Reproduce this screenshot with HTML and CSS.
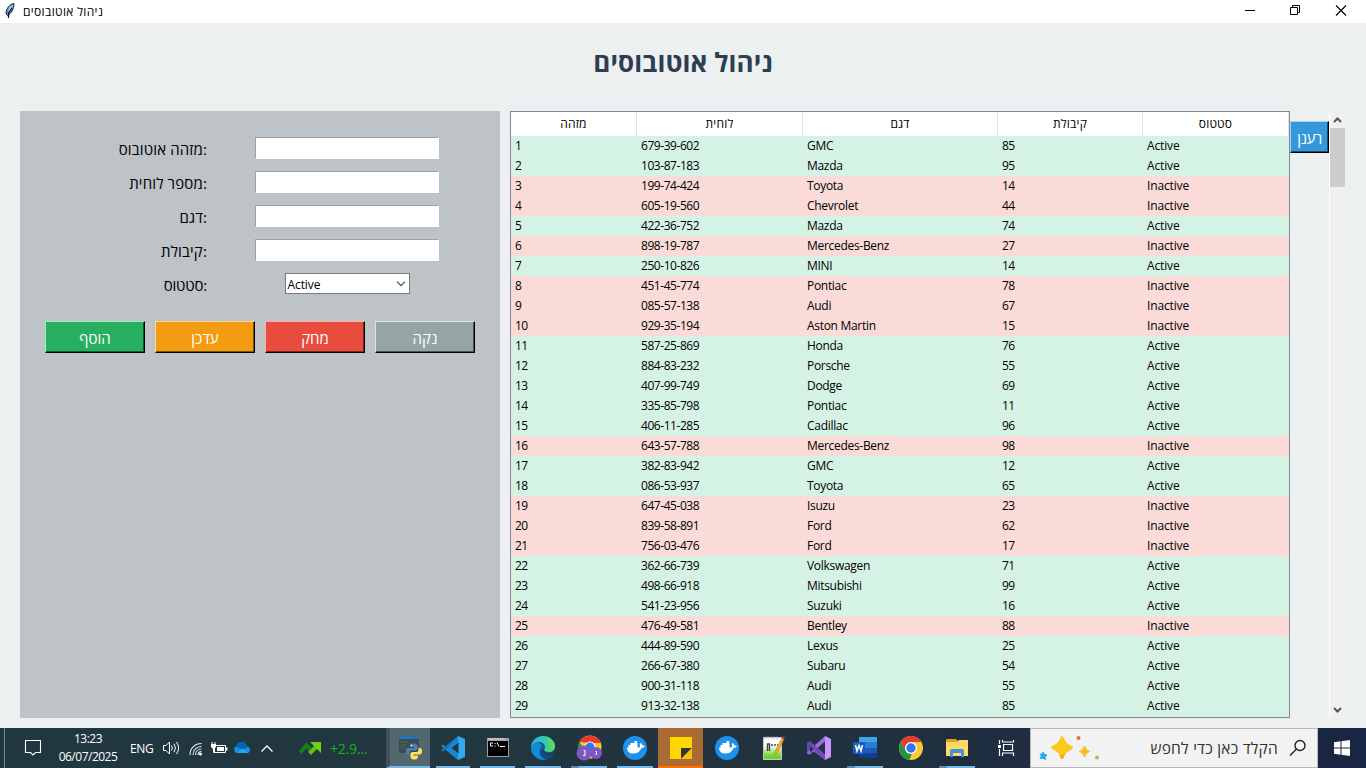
FILE: index.html
```
<!DOCTYPE html>
<html lang="he">
<head>
<meta charset="utf-8">
<title>ניהול אוטובוסים</title>
<link rel="stylesheet" href="styles.css">
</head>
<body>
<div class="screen">
  <header class="titlebar">
    <svg class="feather" width="10" height="16" viewBox="0 0 10 16"><path d="M9 .5C5 1 1 5 1 11l1.500 1.500C6 11 9 6 9 .5z" fill="#5b8fd0" stroke="#222a35"/><path d="M7.500 2 3 11M5 3v4M4 6v3" stroke="#c3dcf6" fill="none"/><path d="M7 5 3.500 10v5" stroke="#111" fill="none" stroke-width="1.200"/></svg>
    <span class="window-title">ניהול אוטובוסים</span>
    <div class="controls">
      <svg width="46" height="22" viewBox="0 0 46 22"><path d="M15 10.500h10" stroke="#000"/></svg>
      <svg width="46" height="22" viewBox="0 0 46 22"><path d="M14.500 7.500h7v7h-7zM16.500 7V5.500h7v7H22" stroke="#000" fill="none"/></svg>
      <svg width="46" height="22" viewBox="0 0 46 22"><path d="m14 5.500 10 10m0-10-10 10" stroke="#000" stroke-width="1.100"/></svg>
    </div>
  </header>
  <main class="app">
    <h1 class="heading"><span>ניהול אוטובוסים</span></h1>
    <div class="content">
      <section class="form">
        <div class="field"><label>מזהה אוטובוס:</label><input class="entry"></div>
        <div class="field"><label>מספר לוחית:</label><input class="entry"></div>
        <div class="field"><label>דגם:</label><input class="entry"></div>
        <div class="field"><label>קיבולת:</label><input class="entry"></div>
        <div class="field"><label class="tight">סטטוס:</label>
          <div class="combo"><span>Active</span><svg width="10" height="6" viewBox="0 0 10 6"><path d="m1 .7 4 4 4-4" fill="none" stroke="#444" stroke-width="1.100"/></svg></div>
        </div>
        <div class="actions">
          <button class="btn add">הוסף</button>
          <button class="btn update">עדכן</button>
          <button class="btn delete">מחק</button>
          <button class="btn clear">נקה</button>
        </div>
      </section>
      <section class="table">
        <div class="row head"><span>מזהה</span><span>לוחית</span><span>דגם</span><span>קיבולת</span><span>סטטוס</span></div>
        <div id="rows"></div>
      </section>
      <button class="btn refresh">רענן</button>
      <div class="scrollbar">
        <svg width="15" height="17" viewBox="0 0 15 17"><path d="M4 11 7.500 7.500 11 11" fill="none" stroke="#555" stroke-width="2"/></svg>
        <div class="thumb"></div>
        <svg class="down" width="15" height="17" viewBox="0 0 15 17"><path d="M4 7 7.500 10.500 11 7" fill="none" stroke="#555" stroke-width="2"/></svg>
      </div>
    </div>
  </main>
  <footer class="taskbar">
    <div class="tray">
      <svg class="note" width="18" height="18" viewBox="0 0 18 18"><path d="M1.500 1.500h15v12h-5l-2.500 2.500-2.500-2.500h-5z" fill="none" stroke="#fff" stroke-width="1.100"/></svg>
      <div class="clock"><span>13:23</span><span>06/07/2025</span></div>
      <span class="lang">ENG</span>
      <svg class="speaker" width="18" height="16" viewBox="0 0 18 16"><path d="M1.500 5.500h2.500l3.500-3.500v12l-3.500-3.500h-2.500z" fill="none" stroke="#fff"/><path d="M9.500 5.500q1.800 2.500 0 5M12 3.800q3 4.200 0 8.400M14.500 2q4.200 6 0 12" fill="none" stroke="#fff"/></svg>
      <svg class="wifi" width="14" height="14" viewBox="0 0 14 14"><g fill="none" stroke="#e8eef0" stroke-width="1.100"><path d="M1 13C1 6 6 1.500 12.500 1.500M4 13c0-5 3.500-8.500 8.500-8.500M6.500 13c0-3.500 2.500-6 6-6M9 13c0-2 1.500-3.500 3.500-3.500"/></g><circle cx="11.500" cy="12" r="1.500" fill="#fff"/></svg>
      <svg class="battery" width="18" height="14" viewBox="0 0 18 14"><path d="M4.500 4.500h11v7h-11z" fill="none" stroke="#fff"/><path d="M7 6h7v4H7zM16 6.500h1.500v3H16zM1 3h5v3L4.500 7.500h-2L1 6z" fill="#fff"/><path d="M2 1v2m3-2v2M3.500 7v4.500h2" stroke="#fff" fill="none"/></svg>
      <svg class="cloud" width="18" height="12" viewBox="0 0 18 12"><path d="M4 11a3.500 3.500 0 0 1-.5-7A5.500 5.500 0 0 1 13 4.500a3.400 3.400 0 0 1 1 6.500z" fill="#1490df"/><path d="M2 5A5.500 5.500 0 0 1 12.500 3L14 5 9 7.500z" fill="#0364b8"/><path d="M3 10.500 9 6.500l5 4.500H4z" fill="#28a8ea"/></svg>
      <svg class="chev" width="14" height="9" viewBox="0 0 14 9"><path d="m1.500 7.500 5.500-5.500 5.500 5.500" fill="none" stroke="#fff" stroke-width="1.300"/></svg>
      <svg class="trend" width="23" height="15" viewBox="0 0 23 15"><path d="m1 11.500 6.500-7 5 5" fill="none" stroke="#16801d" stroke-width="4"/><path d="m9 11 7-7 3 3-7 7z" fill="#62bf16"/><path d="M11 1h11v11z" fill="#71d111"/></svg>
      <span class="stock">+2.9...</span>
    </div>
    <div class="apps">
      <div class="slot active"><svg width="24" height="24" viewBox="0 0 24 24"><path d="M1 1h20v16H1z" fill="#414a4d"/><path d="M1 1h20v2H1z" fill="#087bd3"/><path d="M3 6h7M3 9h5M3 12h4" stroke="#3b704c" stroke-width="1.500"/><path d="M15.500 7.500c-3.500 0-4 1-4 3.500h4.500v1h-6C7 12 7 18.500 10 18.500h1.500v-2.200q0-1.800 2-1.800h4q2 0 2-2V10.500c0-2-1.500-3-4-3z" fill="#4584b6"/><path d="M15.800 23.500c3.700 0 4.200-1.500 4.200-4h-4.500v-1h6.500c2.800 0 2.800-6.500 0-6.500h-1.500v2q0 2-2 2h-4q-2 0-2 2V21c0 1.500 1.300 2.500 3.300 2.500z" fill="#ffe062"/><circle cx="13.500" cy="9.500" r=".8" fill="#fff"/></svg></div>
      <div class="slot open"><svg width="24" height="24" viewBox="0 0 24 24"><path d="M17 0 5 11 2 8.500.5 9.500v1L17 24l1-1V1z" fill="#1a86cf"/><path d="M17 0 5 13 2 15.500.5 14.500v-1L4 10.500z" fill="#1474b8"/><path d="M17 0 24 3v18l-7 3z" fill="#34a8ee"/><path d="M17.500 6.500V17.500L10.500 12z" fill="#22373f"/></svg></div>
      <div class="slot open"><svg width="24" height="24" viewBox="0 0 24 24"><path d="M1 2h22v19H1z" fill="#9aa0a2"/><path d="M2 5h20v15H2z" fill="#000"/><path d="M2 3h17" stroke="#ddd"/><path d="M7 7H4.500v3H7M9 7v1m0 1.500v1M11 6.500l2 4M14 10.500h5" stroke="#fff" fill="none"/></svg></div>
      <div class="slot open"><svg width="24" height="24" viewBox="0 0 24 24"><defs><linearGradient id="eg"><stop stop-color="#28aeea"/><stop offset=".6" stop-color="#35cba8"/><stop offset="1" stop-color="#66df48"/></linearGradient></defs><circle cx="12" cy="12" r="12" fill="#0c5a9f"/><path d="M0 12C0 5 5 0 12 0c7 0 12 5 12 10 0 4-3 6-6 6-3 0-5-1-5-2 0-1 1-1 1-3 0-3-3-5-6-5-4 0-7 3-8 6z" fill="url(#eg)"/><path d="M0 12C0 7 5 6 8 7c2 1 3 2 3 4-3 2-3 8 1 11 1 1 2 1.500 3 1.700C7 25 0 19 0 12z" fill="#1689d5"/><path d="M11.500 10c-3 5 2 11 10.500 8l.8-.5c.2 0 .4.2.2.5L20 22c-6 3-11-1-11-6 0-3 1-4.500 2.500-6z" fill="#164a82"/><path d="M13 14c0 2 3 4 7 3 2-.5 3-2 4-4v5l-1.500-.5C18 20 12 18.500 12 14z" fill="#22373f"/></svg></div>
      <div class="slot open stacked"><svg width="26" height="26" viewBox="0 0 26 26"><circle cx="14" cy="12" r="11.500" fill="#fcc934"/><path d="M3.500 7A12 12 0 0 1 25 8H14z" fill="#e8392b"/><path d="M3.500 7 10 17l-3 5C1 18 1 11 3.500 7z" fill="#2a9547"/><circle cx="14" cy="12" r="5.500" fill="#fff"/><circle cx="14" cy="12" r="4.500" fill="#3478e5"/><circle cx="8" cy="18" r="7.500" fill="#7e57c2"/><circle cx="20" cy="18" r="6" fill="#7e57c2"/><path d="M7.500 15.500H9v5H7M19.500 16.500h1v3h-1" stroke="#fff" fill="none"/></svg></div>
      <div class="slot open"><svg width="24" height="24" viewBox="0 0 24 24"><circle cx="12" cy="12" r="12" fill="#1d91ec"/><path d="M4 11.500h12.500q1-1.500.3-3.500l1.200-1q1.300 1 1.500 2.500 1.500-.2 2.500.5-1 2-3.500 2-2 5.500-8.500 5.500-6 0-6-6zM5.500 9h9v2.500h-9zM7.500 7h7v2h-7zM11.500 5H14v2h-2.500z" fill="#fff"/></svg></div>
      <div class="slot sticky"><svg width="24" height="24" viewBox="0 0 24 24"><path d="M1 1h22v11L12 23H1z" fill="#ffd600"/><path d="M12 12h11L12 23z" fill="#34353a"/><path d="M23 12v11H12z" fill="#f5c400"/></svg></div>
      <div class="slot"><svg width="24" height="24" viewBox="0 0 24 24"><circle cx="12" cy="12" r="12" fill="#1d91ec"/><path d="M4 11.500h12.500q1-1.500.3-3.500l1.200-1q1.300 1 1.500 2.500 1.500-.2 2.500.5-1 2-3.500 2-2 5.500-8.500 5.500-6 0-6-6zM5.500 9h9v2.500h-9zM7.500 7h7v2h-7zM11.500 5H14v2h-2.500z" fill="#fff"/></svg></div>
      <div class="slot"><svg width="24" height="24" viewBox="0 0 24 24"><defs><linearGradient id="ng" x2="0" y2="1"><stop offset=".35" stop-color="#fff"/><stop offset=".85" stop-color="#6cd52b"/></linearGradient></defs><path d="M2.500 1.500h18v22h-18z" fill="url(#ng)" stroke="#c5cbc5"/><path d="M4 .5v3m3-3v3m3-3v3m3-3v3m3-3v3" stroke="#bbb"/><path d="M6.500 15V8h2v7m1.500-6h2m1 0h2m1 0h1" fill="none" stroke="#454545" stroke-width="1.400"/><path d="m21 2 2 1-6.500 14-3 2 .5-3.500z" fill="#efac22" stroke="#a97a26" stroke-width=".5"/><path d="m21.500 0 2.500 1-1 2-2-1z" fill="#a03e3c"/></svg></div>
      <div class="slot"><svg width="24" height="24" viewBox="0 0 24 24"><path d="M0 6.500 3 5.500l15 13V24L3 12.500l-3 4z" fill="#8257cd"/><path d="M0 6.500 3 5.500v13l-3-1z" fill="#6545a6"/><path d="m3 18.500 15-13V0L0 16.500v1z" fill="#9a6be2"/><path d="M3 5.500 9 11l-6 6z" fill="#20323d"/><path d="M3 5.500 18 18.500V24L3 10z" fill="#7349b8"/><path d="m18 0 6 3v18l-6 3z" fill="#ca94ff"/></svg></div>
      <div class="slot open stacked"><svg width="24" height="24" viewBox="0 0 24 24"><path d="M6 1h18v6H6z" fill="#41a5ee"/><path d="M6 6h18v6H6z" fill="#2b7cd3"/><path d="M6 12h18v5H6z" fill="#185abd"/><path d="M6 17h18v5H6z" fill="#103f91"/><rect y="6" width="12" height="12" rx="1" fill="#185abd"/><path d="m2.500 9 1.500 6 2-5.500L8 15l1.500-6" fill="none" stroke="#fff" stroke-width="1.500"/></svg></div>
      <div class="slot"><svg width="24" height="24" viewBox="0 0 24 24"><circle cx="12" cy="12" r="12" fill="#fcc934"/><path d="M1.600 6A12 12 0 0 1 22.400 6H12l-5 9z" fill="#e33b2e"/><path d="M1.600 6 7 15l6 2-2.500 7C1 23-2 13 1.600 6z" fill="#259344"/><circle cx="12" cy="12" r="6" fill="#fff"/><circle cx="12" cy="12" r="4.700" fill="#3277e8"/></svg></div>
      <div class="slot open stacked"><svg width="24" height="24" viewBox="0 0 24 24"><path d="M2 3h9l2 2h9q1 0 1 1v14H1V4z" fill="#e4a11b"/><path d="M1 6h11l2-2h9v16H1z" fill="#ffd867"/><path d="M5 21v-6q0-2 2-2h10q2 0 2 2v6h-3v-4h-8v4z" fill="#3b97dc"/></svg></div>
      <div class="slot view"><svg width="18" height="18" viewBox="0 0 18 18"><path d="M6.500 5.500h9v6h-9zM5.500 1v2h11V1M5.500 17v-3h11v3M2.500 1v4m0 5v7" fill="none" stroke="#fff" stroke-width="1.200"/><path d="M1 6h3v3H1z" fill="#fff"/></svg></div>
    </div>
    <div class="search">
      <svg width="62" height="28" viewBox="0 0 62 28"><path d="M24 2q1 0 1.500 1.500Q27.500 9.500 33 11.500q2 1 2 2t-2 2q-5.500 2-7.500 8Q25 25 24 25t-1.500-1.500q-2-6-7.500-8-2-1-2-2t2-2q5.500-2 7.500-8Q23 2 24 2z" fill="#fdc81a"/><path d="M34 15q-6 2-8.500 8.500Q25 25 24 25t-1.500-1.500l-1-2.500Q28 20 34 15z" fill="#f5ab13"/><path d="M46.500 12q1 4.500 5 5.500-4 1-5 5.500-1-4.500-5-5.500 4-1 5-5.500z" fill="#fdbb17" stroke="#fdbb17"/><path d="m5 18 1.500 2.500L9 21l-2 1.500.5 3L5 24l-3 .5L3.500 22 2 20l2.500.5z" fill="#18a8ee" stroke="#18a8ee"/><circle cx="40.500" cy="4" r="2" fill="#f06a32"/><circle cx="59" cy="23.500" r="2" fill="#8dcf47"/></svg>
      <span class="search-text">הקלד כאן כדי לחפש</span>
      <svg class="glass" width="18" height="18" viewBox="0 0 18 18"><circle cx="11" cy="6.500" r="5" fill="none" stroke="#222" stroke-width="1.400"/><path d="M7.300 10.200 1 16.500" stroke="#222" stroke-width="1.400"/></svg>
    </div>
    <div class="start"><svg width="16" height="16" viewBox="0 0 16 16"><path d="m0 2.300 6.500-1v6.200H0zM7.500 1.200 16 0v7.500H7.500zM0 8.500h6.500v6.200l-6.500-1zM7.500 8.500H16V16l-8.500-1.200z" fill="#fff"/></svg></div>
  </footer>
</div>
<script src="app.js"></script>
</body>
</html>
```
FILE: styles.css
```
* { box-sizing: border-box; }
body { margin: 0; font-family: "Open Sans", "Noto Sans", sans-serif; font-size: 12px; color: #000; }
svg { display: block; flex: none; }
.screen { width: 1366px; height: 768px; display: flex; flex-direction: column; overflow: hidden; background: #ecf0f1; }
.titlebar { height: 23px; flex: none; background: #fff; display: flex; align-items: center; padding-left: 5px; }
.feather { margin-top: -2px; }
.window-title { margin-left: 8px; font-size: 12px; line-height: 22px; letter-spacing: .35px; white-space: nowrap; }
.controls { margin-left: auto; display: flex; height: 22px; margin-bottom: 1px; margin-right: -2px; }
.app { flex: 1; padding: 0 20px 10px; display: flex; flex-direction: column; min-height: 0; }
.heading { margin: 0; height: 88px; padding-top: 21px; line-height: 36px; font-size: 26px; font-weight: 700; color: #2c3e50; text-align: center; letter-spacing: .1px; }
.content { display: flex; flex: 1; min-height: 0; }
.form { width: 480px; margin-right: 10px; background: #bdc3c7; padding: 20px 25px; }
.field { display: grid; grid-template-columns: 162px 184px; column-gap: 48px; height: 34px; align-items: center; }
.field label { text-align: right; font-size: 15px; line-height: 20px; padding-top: 1px; letter-spacing: .15px; white-space: nowrap; }
.field .tight { letter-spacing: -.2px; }
.entry { width: 184px; height: 22px; margin: 0; padding: 0; border: 1px solid #fff; border-top-color: #a0a0a0; border-left-color: #a0a0a0; background: #fff; border-radius: 0; }
.combo { justify-self: center; width: 125px; height: 21px; border: 1px solid #7a7a7a; background: #fff; display: flex; align-items: center; justify-content: space-between; padding: 1px 3px 0 2px; margin-bottom: 1px; letter-spacing: -.1px; }
.actions { display: flex; gap: 10px; margin-top: 20px; }
.btn { font-family: inherit; font-size: 15px; line-height: 20px; color: #fff; margin: 0; padding: 1px 0 0; width: 100px; height: 32px; border: 1px solid; border-bottom: 1px solid #000; border-right: 1px solid #000; border-radius: 0; white-space: nowrap; }
.add { background: #27ae60; border-top-color: #9df0bd; border-left-color: #9df0bd; box-shadow: inset -1px -1px #14592f; }
.update { background: #f39c12; border-top-color: #ffd89b; border-left-color: #ffd89b; box-shadow: inset -1px -1px #7b4f07; }
.delete { background: #e74c3c; border-top-color: #ffb1a9; border-left-color: #ffb1a9; box-shadow: inset -1px -1px #762620; }
.clear { background: #95a5a6; border-top-color: #d9e6e6; border-left-color: #d9e6e6; box-shadow: inset -1px -1px #4b5455; }
.refresh { background: #3498db; border-top-color: #a4d6f8; border-left-color: #a4d6f8; box-shadow: inset -1px -1px #1a4e71; width: 39px; margin-top: 10px; letter-spacing: -.5px; }
.table { width: 780px; border: 1px solid #828790; background: #d5f3e5; overflow: hidden; }
.row { display: grid; grid-template-columns: 126px 166px 195px 145px 146px; height: 20px; line-height: 20px; background: #d5f3e5; }
.row span { padding-left: 4px; white-space: nowrap; }
.row .plate { letter-spacing: -.45px; }
.row .num { letter-spacing: -.6px; }
.row .word { letter-spacing: -.3px; }
.row .state { letter-spacing: -.15px; }
.row.inactive { background: #fadbd8; }
.row.head { height: 24px; line-height: 24px; background: #fff; letter-spacing: .2px; }
.row.head span { padding: 0; text-align: center; border-right: 1px solid #e5e5e5; }
.scrollbar { width: 17px; border-left: 1px solid #fff; background: #f0f0f0; background-clip: padding-box; border-right: 1px solid #ecf0f1; display: flex; flex-direction: column; }
.thumb { height: 59px; width: 15px; background: #cdcdcd; }
.down { margin-top: auto; }
.taskbar { height: 40px; flex: none; display: flex; background: linear-gradient(90deg, #21373f 0, #22373f 35%, #20303f 65%, #192643 100%); color: #fff; }
.tray { display: flex; align-items: center; border-left: 1px solid #74858a; margin-left: 4px; width: 382px; padding-left: 19px; white-space: nowrap; }
.clock { display: flex; flex-direction: column; align-items: center; line-height: 18px; width: 66px; margin-left: 13px; margin-right: 9px; letter-spacing: -.5px; }
.lang { width: 27px; letter-spacing: -.3px; }
.speaker { margin-left: 5px; }
.wifi { margin: 2px 0 0 9px; }
.battery { margin-left: 7px; }
.cloud { margin-left: 6px; }
.chev { margin-left: 8px; }
.trend { margin-left: 25px; }
.stock { margin-left: 8px; color: #13b51a; font-size: 14px; letter-spacing: -.2px; }
.apps { display: grid; grid-template-columns: 45px 44px 45px 46px 46px 46px 46px 46px 46px 46px 46px 46px 46px 50px; }
.slot { display: flex; align-items: center; justify-content: center; height: 40px; }
.open { margin: 0 5px; border-bottom: 2px solid #76b9ed; padding-top: 2px; }
.stacked { border-image: linear-gradient(90deg, #5c8bb4 8px, #263b50 8px, #76b9ed 9px) 2; border-width: 0 0 2px; border-style: solid; }
.active { background: #52676e; border-bottom: 2px solid #76b9ed; border-left: 4px solid #405058; margin-right: 1px; padding-top: 2px; }
.sticky { background: #a96a34; border-bottom: 2px solid #ff7200; padding-top: 2px; width: 45px; }
.view { padding-left: 2px; }
.search { width: 288px; background: #f2f2f2; border: 1px solid #bababa; display: flex; align-items: center; padding: 0 10px 0 7px; }
.search-text { margin-left: auto; color: #333; font-size: 15.500px; letter-spacing: .25px; white-space: nowrap; }
.glass { margin-left: 11px; }
.start { flex: 1; display: flex; align-items: center; justify-content: center; }
```
FILE: app.js
```
const buses = `679-39-602,GMC,85,1
103-87-183,Mazda,95,1
199-74-424,Toyota,14,0
605-19-560,Chevrolet,44,0
422-36-752,Mazda,74,1
898-19-787,Mercedes-Benz,27,0
250-10-826,MINI,14,1
451-45-774,Pontiac,78,0
085-57-138,Audi,67,0
929-35-194,Aston Martin,15,0
587-25-869,Honda,76,1
884-83-232,Porsche,55,1
407-99-749,Dodge,69,1
335-85-798,Pontiac,11,1
406-11-285,Cadillac,96,1
643-57-788,Mercedes-Benz,98,0
382-83-942,GMC,12,1
086-53-937,Toyota,65,1
647-45-038,Isuzu,23,0
839-58-891,Ford,62,0
756-03-476,Ford,17,0
362-66-739,Volkswagen,71,1
498-66-918,Mitsubishi,99,1
541-23-956,Suzuki,16,1
476-49-581,Bentley,88,0
444-89-590,Lexus,25,1
266-67-380,Subaru,54,1
900-31-118,Audi,55,1
913-32-138,Audi,85,1`;

document.getElementById("rows").innerHTML = buses.split("\n").map((line, i) => {
  const [plate, model, seats, on] = line.split(",");
  const active = on === "1";
  return `<div class="row ${active ? "" : "inactive"}"><span class="num">${i + 1}</span><span class="plate">${plate}</span><span class="word">${model}</span><span class="num">${seats}</span><span class="state">${active ? "Active" : "Inactive"}</span></div>`;
}).join("");
```
